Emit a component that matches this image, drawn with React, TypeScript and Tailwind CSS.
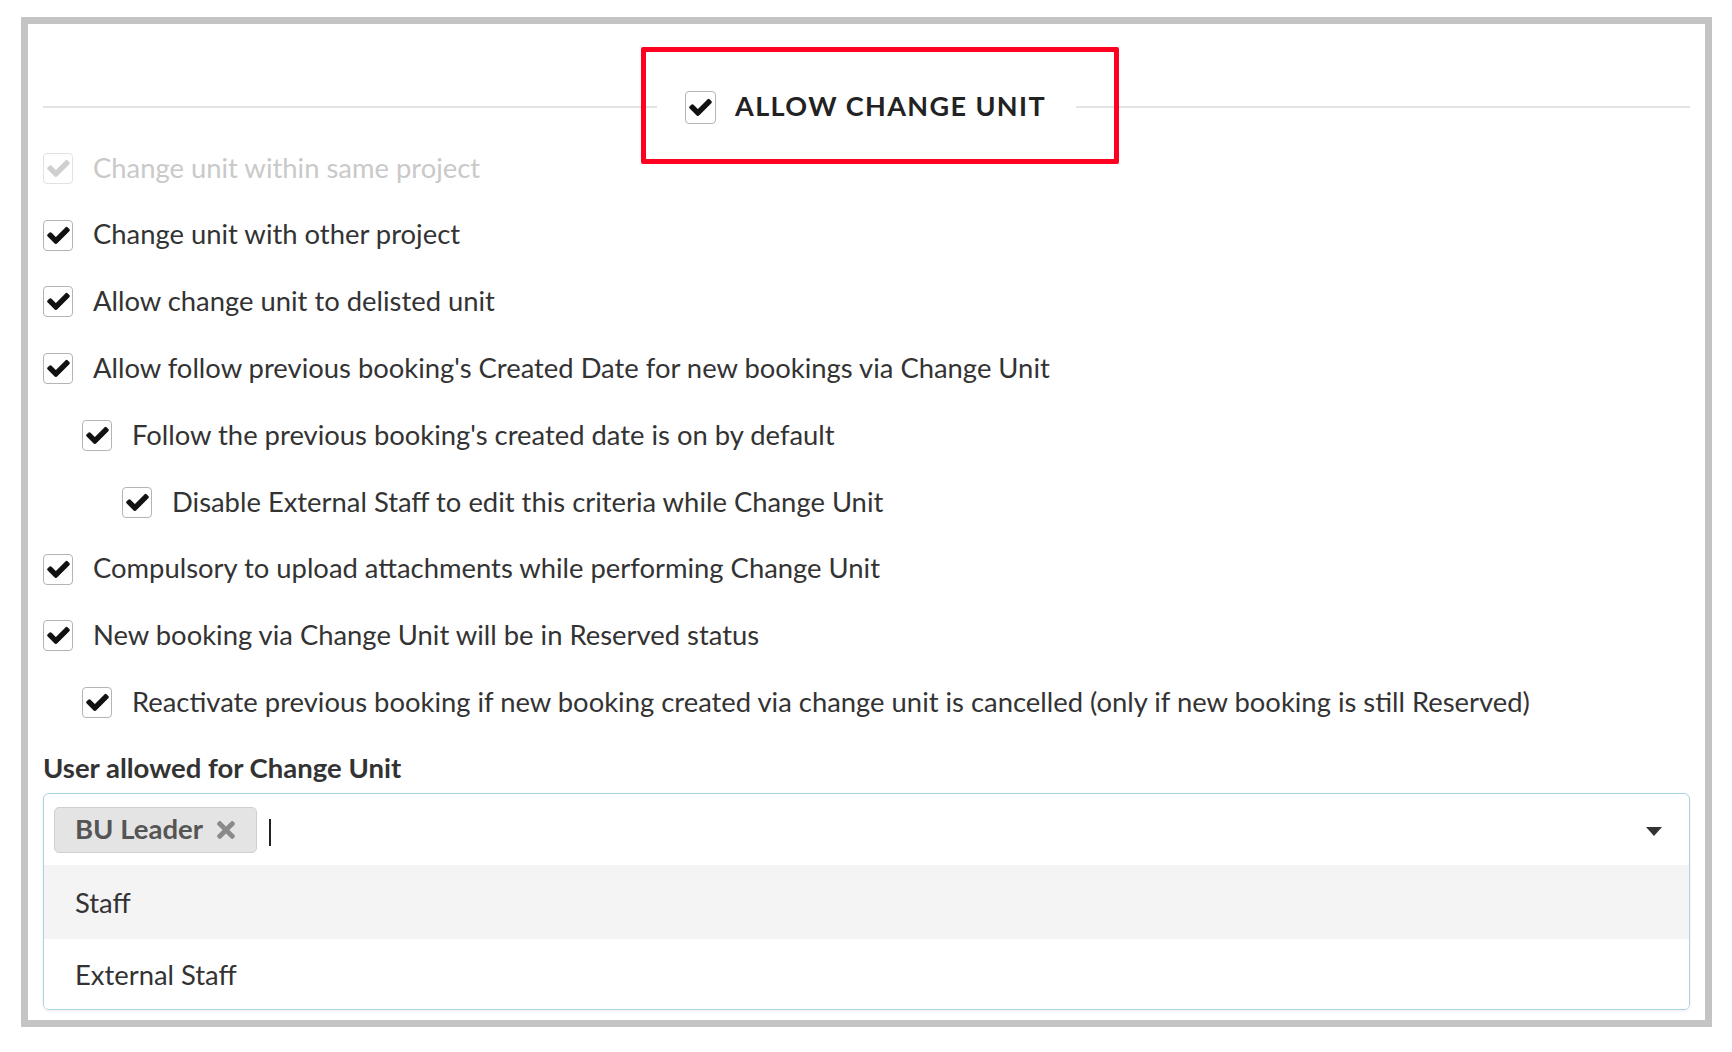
import React from "react";

const font = { fontFamily: "Lato, 'Open Sans', sans-serif" };

function Check({ disabled = false, size = "w-[30px] h-[31px]" }: { disabled?: boolean; size?: string }) {
  return (
    <div
      className={`${size} shrink-0 rounded-[4px] border-[1.5px] ${disabled ? "border-[#e2e2e2]" : "border-[#b4b4b4]"} bg-white flex items-center justify-center`}
    >
      <svg viewBox="-20 -20 552 552" className="w-[23px] h-[23px]">
        <path
          fill={disabled ? "#cfcfcf" : "#111"}
          stroke={disabled ? "#cfcfcf" : "#111"}
          strokeWidth={28}
          strokeLinejoin="round"
          d="M173.898 439.404l-166.4-166.4c-9.997-9.997-9.997-26.206 0-36.204l36.203-36.204c9.997-9.998 26.207-9.998 36.204 0L192 312.69 432.095 72.596c9.997-9.997 26.207-9.997 36.204 0l36.203 36.204c9.997 9.997 9.997 26.206 0 36.204l-294.4 294.401c-9.998 9.997-26.207 9.997-36.204-.001z"
        />
      </svg>
    </div>
  );
}

const rows: { text: string; level: number; disabled?: boolean }[] = [
  { text: "Change unit within same project", level: 0, disabled: true },
  { text: "Change unit with other project", level: 0 },
  { text: "Allow change unit to delisted unit", level: 0 },
  { text: "Allow follow previous booking's Created Date for new bookings via Change Unit", level: 0 },
  { text: "Follow the previous booking's created date is on by default", level: 1 },
  { text: "Disable External Staff to edit this criteria while Change Unit", level: 2 },
  { text: "Compulsory to upload attachments while performing Change Unit", level: 0 },
  { text: "New booking via Change Unit will be in Reserved status", level: 0 },
  { text: "Reactivate previous booking if new booking created via change unit is cancelled (only if new booking is still Reserved)", level: 1 },
];

const indent = ["pl-0", "pl-[39px]", "pl-[79px]"];

export default function App() {
  return (
    <div className="w-[1732px] h-[1052px] bg-white pt-[17px] pl-[21px]" style={font}>
      <div className="w-[1691px] h-[1010px] border-[7px] border-[#c4c4c4] bg-white px-[15px] pt-[53px]">
        {/* header */}
        <div className="relative h-[60px] flex items-center">
          <div className="h-[2px] bg-[#e3e3e3] w-[614px]" />
          <div className="flex items-center pl-[28px] pr-[30px]">
            <Check size="w-[31px] h-[33px]" />
            <span className="ml-[19px] mb-[3px] text-[27px] font-bold tracking-[1.4px] text-[#222] leading-none">
              ALLOW CHANGE UNIT
            </span>
          </div>
          <div className="h-[2px] bg-[#e3e3e3] flex-1" />
          <div className="absolute left-[598px] top-[-30px] w-[478px] h-[117px] border-[5px] border-[#fe0020] rounded-[2px] pointer-events-none" />
        </div>

        {/* rows */}
        <div className="flex flex-col -mt-[2px]">
          {rows.map((r, i) => (
            <div key={i} className={`h-[66.8px] flex items-center ${indent[r.level]}`}>
              <Check disabled={r.disabled} />
              <span
                className={`ml-[20px] mb-[2px] text-[27.4px] leading-none ${r.disabled ? "text-[#c9c9c9]" : "text-[#333]"}`}
              >
                {r.text}
              </span>
            </div>
          ))}
        </div>

        {/* label */}
        <div className="h-[57px] pt-[6px] flex items-center text-[27.5px] font-bold text-[#333]">
          User allowed for Change Unit
        </div>

        {/* multi select */}
        <div className="border-[1.5px] border-[#a9d4e4] rounded-[6px] overflow-hidden shadow-[0_1px_3px_rgba(0,0,0,0.08)]">
          <div className="h-[71px] flex items-center pl-[10px] pr-[27px]">
            <div className="h-[46px] flex items-center rounded-[5px] border border-[#cfcfcf] bg-[#e4e4e4] pl-[20px] pr-[20px]">
              <span className="text-[27.5px] font-bold text-[#555] leading-none mb-[2px]">BU Leader</span>
              <svg viewBox="0 0 352 512" className="ml-[13px] w-[20px] h-[26px]">
                <path
                  fill="#8a8a8a"
                  d="M242.72 256l100.07-100.07c12.28-12.28 12.28-32.19 0-44.48l-22.24-22.24c-12.280-12.28-32.19-12.28-44.48 0L176 189.28 75.93 89.21c-12.28-12.28-32.19-12.28-44.48 0L9.21 111.45c-12.28 12.28-12.28 32.19 0 44.48L109.28 256 9.21 356.07c-12.28 12.28-12.28 32.19 0 44.48l22.24 22.24c12.28 12.28 32.2 12.28 44.48 0L176 322.72l100.07 100.07c12.28 12.28 32.2 12.28 44.48 0l22.24-22.24c12.28-12.28 12.28-32.19 0-44.48L242.72 256z"
                />
              </svg>
            </div>
            <div className="ml-[12px] w-[2px] h-[27px] bg-[#222] mt-[6px]" />
            <div className="flex-1" />
            <svg viewBox="0 0 16 9" className="w-[16px] h-[9px] mt-[4px]">
              <path d="M0 0 L16 0 L8 9 Z" fill="#333" />
            </svg>
          </div>
          <div className="h-[74px] bg-[#f4f4f4] flex items-center pl-[31px] text-[27.4px] text-[#333]">
            Staff
          </div>
          <div className="h-[70px] bg-white flex items-center pl-[31px] text-[27.4px] text-[#333]">
            External Staff
          </div>
        </div>
      </div>
    </div>
  );
}
